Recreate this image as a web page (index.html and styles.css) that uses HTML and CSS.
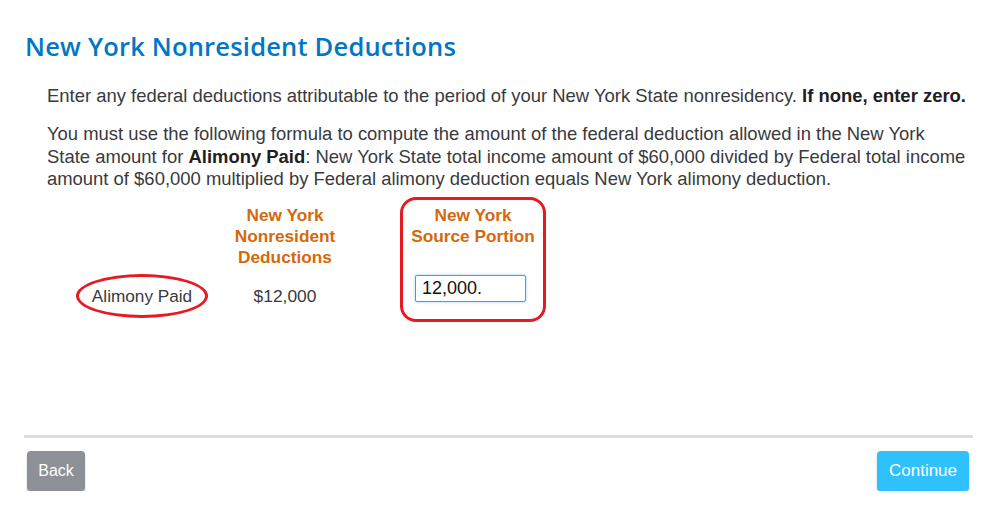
FILE: index.html
```html
<!DOCTYPE html>
<html lang="en">
<head>
<meta charset="utf-8">
<title>New York Nonresident Deductions</title>
<link rel="stylesheet" href="styles.css">
</head>
<body>
<div class="page">
  <h1 class="title">New York Nonresident Deductions</h1>
  <div class="content">
    <p class="intro">Enter any federal deductions attributable to the period of your New York State nonresidency. <b>If none, enter zero.</b></p>
    <p class="formula">You must use the following formula to compute the amount of the federal deduction allowed in the New York State amount for <b>Alimony Paid</b>: New York State total income amount of $60,000 divided by Federal total income amount of $60,000 multiplied by Federal alimony deduction equals New York alimony deduction.</p>
    <div class="table">
      <div class="col col-label">
        <div class="ellipse">Alimony Paid</div>
      </div>
      <div class="col col-amount">
        <div class="head">New York<br>Nonresident<br>Deductions</div>
        <div class="amount">$12,000</div>
      </div>
      <div class="col col-source">
        <div class="head">New York<br>Source Portion</div>
        <input class="field" type="text" value="12,000.">
      </div>
    </div>
  </div>
  <div class="footer">
    <button class="btn btn-back">Back</button>
    <button class="btn btn-continue">Continue</button>
  </div>
</div>
</body>
</html>
```
FILE: styles.css
```css
html, body {
  margin: 0;
  padding: 0;
  background: #ffffff;
}
body {
  font-family: "Liberation Sans", Arial, sans-serif;
  color: #393a3d;
}
.page {
  width: 999px;
}
.title {
  margin: 0;
  padding: 31px 0 0 25px;
  font-family: "Open Sans", Lato, sans-serif;
  font-weight: 600;
  font-size: 25.5px;
  line-height: 30px;
  letter-spacing: 0.2px;
  color: #0077c5;
}
.content {
  padding: 0 30px 0 47px;
}
.intro {
  margin: 24px 0 0 0;
  font-size: 18.45px;
  line-height: 22.5px;
}
.formula {
  margin: 15.5px 0 0 0;
  font-size: 18.45px;
  line-height: 22.5px;
}
.intro b, .formula b {
  font-weight: bold;
  color: #1f2023;
}
.table {
  display: flex;
  align-items: flex-start;
  margin: 6.5px 0 0 29px;
}
.col {
  display: flex;
  flex-direction: column;
  align-items: center;
  text-align: center;
}
.col-label {
  width: 132px;
  padding-top: 77px;
}
.ellipse {
  box-sizing: border-box;
  width: 132px;
  height: 44px;
  border: 3px solid #e51a23;
  border-radius: 50%;
  display: flex;
  align-items: center;
  justify-content: center;
  font-size: 17.2px;
  color: #393a3d;
  padding-top: 1px;
}
.col-amount {
  width: 154px;
  padding-top: 8px;
}
.head {
  font-size: 17.25px;
  font-weight: bold;
  line-height: 21px;
  color: #d4690c;
}
.amount {
  margin-top: 18px;
  font-size: 17.4px;
  line-height: 20px;
  color: #393a3d;
}
.col-source {
  box-sizing: border-box;
  width: 146px;
  height: 125px;
  margin-left: 38px;
  border: 3.5px solid #e51a23;
  border-radius: 16px;
  padding-top: 4.5px;
}
.field {
  box-sizing: border-box;
  margin: 28px 5px 0 0;
  width: 111px;
  height: 27px;
  border: 1.5px solid #2ca8e8;
  border-radius: 2px;
  box-shadow: 0 0 3px rgba(44, 168, 232, 0.5);
  padding: 0 6px;
  font-family: "Liberation Sans", Arial, sans-serif;
  font-size: 18px;
  color: #111;
  outline: none;
}
.footer {
  margin: 113px 26px 0 24px;
  border-top: 3px solid #dcdcdc;
  padding: 13px 4px 0 3px;
  display: flex;
  justify-content: space-between;
}
.btn {
  height: 40px;
  border: none;
  border-radius: 4px;
  color: #ffffff;
  font-family: "Liberation Sans", Arial, sans-serif;
  font-size: 17px;
  box-shadow: 0 2px 2px rgba(0, 0, 0, 0.25);
  padding: 0;
}
.btn-back {
  width: 58px;
  background: #8d9097;
  font-size: 16px;
}
.btn-continue {
  width: 92px;
  background: #2fc0fe;
}
```
